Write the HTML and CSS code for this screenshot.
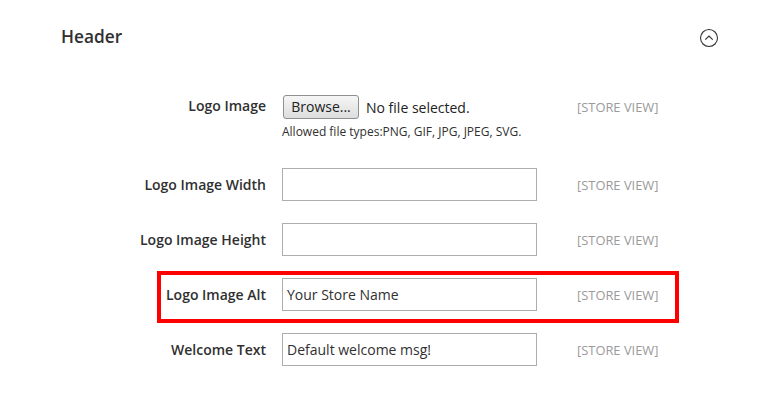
FILE: index.html
```html
<!DOCTYPE html>
<html>
<head>
<meta charset="utf-8">
<link rel="stylesheet" href="styles.css">
</head>
<body>
<div class="page">
  <div class="section-head">
    <div class="title">Header</div>
    <svg class="toggle" width="20" height="20" viewBox="0 0 20 20">
      <circle cx="10" cy="10" r="8.5" fill="none" stroke="#333" stroke-width="1.1"/>
      <path d="M6.3 11.6 L10 8 L13.7 11.6" fill="none" stroke="#333" stroke-width="1.2"/>
    </svg>
  </div>
  <div class="form">
    <div class="row row-file">
      <div class="label">Logo Image</div>
      <div class="control">
        <div class="file">
          <span class="browse">Browse...</span>
          <span class="nofile">No file selected.</span>
        </div>
        <div class="note">Allowed file types:PNG, GIF, JPG, JPEG, SVG.</div>
      </div>
      <div class="scope">[STORE VIEW]</div>
    </div>
    <div class="row">
      <div class="label">Logo Image Width</div>
      <div class="input"></div>
      <div class="scope">[STORE VIEW]</div>
    </div>
    <div class="row">
      <div class="label">Logo Image Height</div>
      <div class="input"></div>
      <div class="scope">[STORE VIEW]</div>
    </div>
    <div class="row highlight">
      <div class="label">Logo Image Alt</div>
      <div class="input">Your Store Name</div>
      <div class="scope">[STORE VIEW]</div>
    </div>
    <div class="row">
      <div class="label">Welcome Text</div>
      <div class="input">Default welcome msg!</div>
      <div class="scope">[STORE VIEW]</div>
    </div>
  </div>
</div>
</body>
</html>
```
FILE: styles.css
```css
html, body {
  margin: 0;
  padding: 0;
  background: #fff;
}
body {
  font-family: "Open Sans", "DejaVu Sans", sans-serif;
  color: #303030;
  width: 759px;
  height: 407px;
  overflow: hidden;
}
.section-head {
  display: flex;
  align-items: center;
  justify-content: space-between;
  padding: 26px 40px 0 61px;
  height: 22px;
}
.title {
  font-size: 17.3px;
  font-weight: 600;
  line-height: 22px;
  color: #303030;
}
.toggle {
  display: block;
  margin-right: 0;
  margin-top: 2px;
}
.form {
  margin-top: 47px;
  display: flex;
  flex-direction: column;
  gap: 22px;
}
.row {
  display: grid;
  grid-template-columns: 266px 255px auto;
  column-gap: 16px;
  align-items: center;
  position: relative;
}
.row .scope {
  margin-left: 24px;
}
.row-file {
  align-items: start;
  margin-bottom: 7px;
}
.label {
  text-align: right;
  font-size: 14px;
  font-weight: 600;
  line-height: 24px;
  color: #303030;
}
.row-file .label {
  line-height: 22px;
}
.scope {
  font-size: 12.9px;
  color: #9a9a9a;
  line-height: 24px;
}
.file {
  display: flex;
  align-items: center;
  height: 24px;
}
.browse {
  box-sizing: border-box;
  width: 76px;
  height: 24px;
  margin-left: 1px;
  border: 1px solid #8f8f8f;
  border-radius: 3px;
  background: linear-gradient(#f6f6f6, #dddddd);
  font-size: 14px;
  line-height: 22px;
  text-align: center;
  color: #222;
}
.nofile {
  margin-left: 7px;
  font-size: 14px;
  color: #222;
}
.note {
  margin-top: 6px;
  font-size: 12px;
  line-height: 14px;
  color: #303030;
}
.input {
  box-sizing: border-box;
  height: 33px;
  border: 1px solid #adadad;
  padding: 0 4px;
  font-size: 14px;
  line-height: 31px;
  color: #303030;
}
.highlight::after {
  content: "";
  position: absolute;
  left: 157px;
  top: -7px;
  width: 522px;
  height: 52px;
  box-sizing: border-box;
  border: 4px solid #ff0000;
  pointer-events: none;
}
```
